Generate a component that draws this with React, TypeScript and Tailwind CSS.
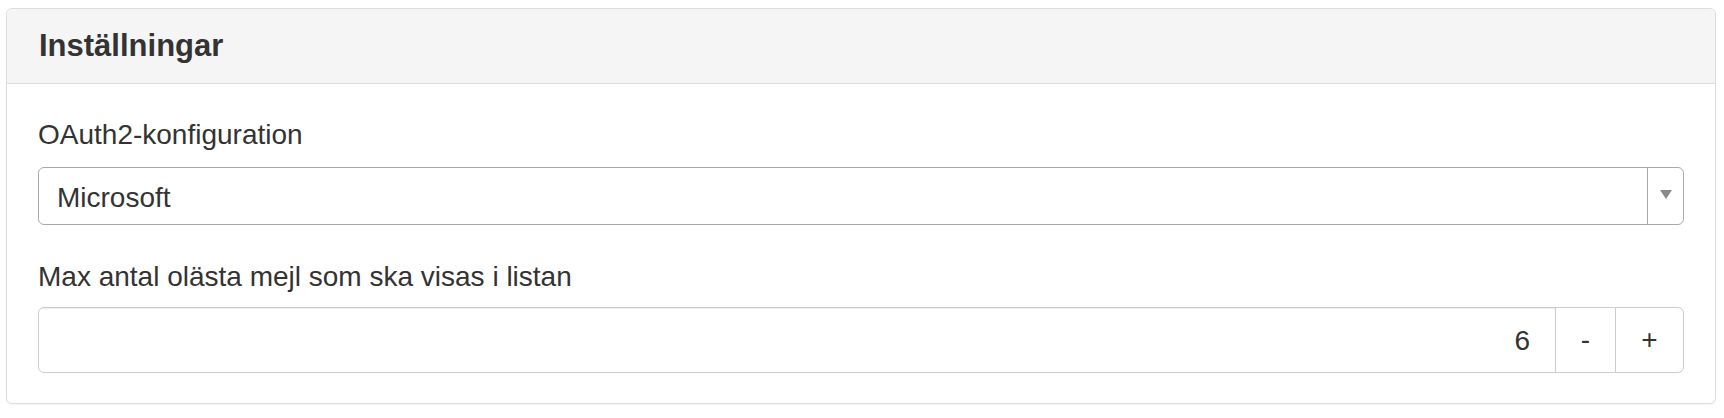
import { useState } from "react";

const App = () => {
    const [provider, setProvider] = useState<string>("Microsoft");
    const [maxUnread, setMaxUnread] = useState<number>(6);

    return (
        <div className="min-h-screen bg-white pl-[6px] pr-[8px] pt-[8px] font-['Liberation_Sans',Arial,sans-serif] text-[#333]">
            <div className="rounded-[6px] border border-[#dddddd] bg-white shadow-[0_1px_2px_rgba(0,0,0,0.05)]">
                <div className="flex h-[75px] items-center rounded-t-[6px] border-b border-[#dddddd] bg-[#f5f5f5] px-[32px] pb-[2px]">
                    <h3 className="text-[31px] font-bold leading-none">Inställningar</h3>
                </div>
                <div className="px-[31px] pt-[32px] pb-[30px]">
                    <label className="block text-[28px] leading-[38px]">OAuth2-konfiguration</label>
                    <div className="mt-[13px] flex h-[58px] overflow-hidden rounded-[6px] border border-[#aaaaaa] bg-white">
                        <div className="flex flex-1 items-center pl-[18px] pt-[3px] text-[28px]">{provider}</div>
                        <button
                            className="flex w-[36px] items-center justify-center border-l border-[#aaaaaa] pb-[4px]"
                            onClick={() => setProvider(provider)}
                        >
                            <svg width="12" height="9" viewBox="0 0 12 9">
                                <polygon points="0,0 12,0 6,9" fill="#888888" />
                            </svg>
                        </button>
                    </div>

                    <label className="mt-[33px] block text-[28px] leading-[38px]">Max antal olästa mejl som ska visas i listan</label>
                    <div className="mt-[11px] flex h-[66px] overflow-hidden rounded-[6px] border border-[#cccccc] bg-white">
                        <div className="flex flex-1 items-center justify-end pr-[25px] pt-[2px] text-[28px] shadow-[inset_0_1px_1px_rgba(0,0,0,0.075)]">
                            {maxUnread}
                        </div>
                        <button
                            className="flex w-[60px] items-center justify-center border-l border-[#cccccc] text-[28px]"
                            onClick={() => setMaxUnread(Math.max(0, maxUnread - 1))}
                        >
                            -
                        </button>
                        <button
                            className="flex w-[68px] items-center justify-center border-l border-[#cccccc] text-[28px]"
                            onClick={() => setMaxUnread(maxUnread + 1)}
                        >
                            +
                        </button>
                    </div>
                </div>
            </div>
        </div>
    );
};

export default App;
